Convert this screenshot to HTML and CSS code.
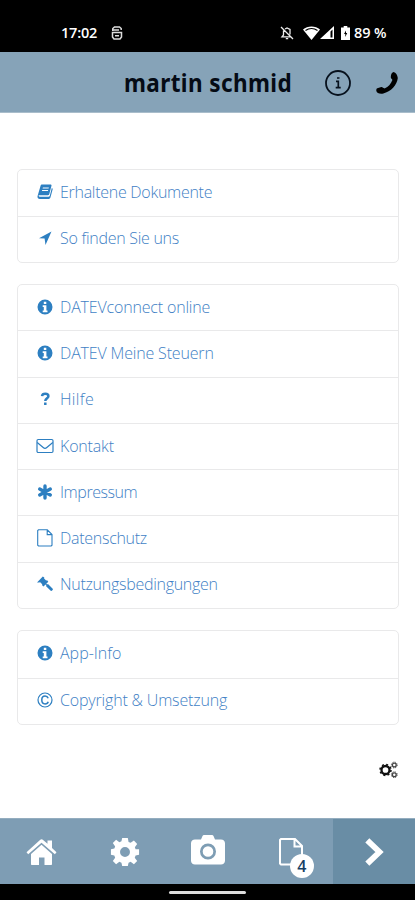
FILE: index.html
```html
<!DOCTYPE html>
<html lang="de">
<head>
<meta charset="utf-8">
<meta name="viewport" content="width=device-width">
<title>martin schmid</title>
<link rel="stylesheet" href="styles.css">
</head>
<body>
<svg class="defs" aria-hidden="true">
  <symbol id="info" viewBox="0 0 16 16"><path fill-rule="evenodd" d="M8 .5a7.500 7.500 0 1 0 0 15 7.500 7.500 0 0 0 0-15zM6.800 2.700h2.500v2.200H6.800zM5.700 6.300h3.700v5.100h1.100v1.800H5.700v-1.800h1.100V8.100H5.700z"/></symbol>
  <symbol id="gear" viewBox="0 0 32 32"><path fill-rule="evenodd" d="M13 1h6l.8 4.200 2.200.9L25.500 3.700 29 7.400l-2.500 3.500.8 2.200L31 13v6l-3.700.8-.9 2.200L29 25.500 25.500 29 22 26.500l-2.200.9L19 31h-6l-.8-3.600-2.200-.9L6.500 29 3 25.500 5.500 22l-.9-2.200L1 19v-6l3.600-.8.900-2.200L3 6.500 6.500 3 10 5.500l2.200-.9zM16 10.700a5.300 5.300 0 1 0 0 10.600 5.300 5.300 0 0 0 0-10.600z"/></symbol>
</svg>
<div class="phone">
  <div class="status">
    <span class="time">17:02</span>
    <svg class="s-app" viewBox="0 0 12 14" fill="none" stroke="#ddd" stroke-width="1.500"><path d="M1.800 5V2.500L3.500 1h5l1.700 1.500V4M1 4h7M1.500 6.500h9V11L9 13H3l-1.500-2zM4 9.700h4"/></svg>
    <svg class="s-bell" viewBox="0 0 14 14" fill="none" stroke="#eee" stroke-width="1.300"><path d="M1 1l12 12M3.500 4.500V9L2 10.800h8.500M5 3l2-1 3 1.500V8.500M5.800 12.700h2.400"/></svg>
    <svg class="s-wifi" viewBox="0 0 17 14"><path fill="#fff" d="M8.500 14L0 3.500C4.500-.6 12.500-.6 17 3.500z"/><path d="M2.500 4.500c3.500-2.400 8.500-2.400 12 0" stroke="#000" stroke-width="1.200" fill="none"/></svg>
    <svg class="s-cell" viewBox="0 0 14 13"><path fill="#fff" fill-rule="evenodd" d="M14 0v13H0zM10.500 5.500v6h2v-8z"/></svg>
    <svg class="s-bat" viewBox="0 0 9 14"><path fill="#fff" fill-rule="evenodd" d="M2.700 0h3.600v1.500H9V14H0V1.500h2.700zM5 4.500L3 8h1.300v3L6.200 7H5z"/></svg>
    <span class="pct">89 %</span>
  </div>
  <header class="bar">
    <h1><span>martin schmid</span></h1>
    <svg class="h-info" viewBox="0 0 26 26" fill="none" stroke="#07111d" stroke-width="1.800"><circle cx="13" cy="13" r="12"/><path stroke-width="1.700" d="M11 11.300h2.300v6M10.700 17.600h5M12 8h2.500"/></svg>
    <svg class="h-phone" viewBox="0 0 22 22"><path d="M17.500 0c2.500.3 3.800 3 4.300 6-.6 7-7 13.700-14.500 15.500C4 22.300.500 21 .3 18.800c-.1-1 .2-2.200 1-2.500l4-1.200c1.500-.2 2.200 1.800 3.700 1.200 3-1.300 6-4.500 7.300-8.100.3-1.500-1.600-1.500-1.500-3.200.2-2.500.7-4.500 2.700-5z"/></svg>
  </header>
  <main>
    <ul class="card">
      <li><svg class="ic" viewBox="0 0 16 16"><path fill-rule="evenodd" d="M5.200.5h8.300c.8 0 1.200.6 1 1.300L12.300 10c-.2.800-.8 1.200-1.500 1.200H2.200c-.5 0-.7.500-.5.900.2.400.5.600 1 .600h8.700c.7 0 1.200-.3 1.400-1l2-7.700c.8.400 1 .9.800 1.500L13.500 13.300c-.3 1.200-1.100 1.800-2.200 1.800H2.800C1.300 15.100.2 13.800.5 12.300L3.500 1.900C3.800 1 4.300.5 5.200.5zm.7 2.900l-.3 1h6l.3-1zM5.200 6l-.3 1h6l.3-1z"/></svg><a class="t1">Erhaltene Dokumente</a></li>
      <li><svg class="ic" viewBox="0 0 16 16"><path d="M14.500 1.500L8.500 15l-.9-6.500L2 8.300z"/></svg><a class="t1">So finden Sie uns</a></li>
    </ul>
    <ul class="card">
      <li><svg class="ic"><use href="#info"/></svg><a class="t2">DATEVconnect online</a></li>
      <li><svg class="ic"><use href="#info"/></svg><a class="t2">DATEV Meine Steuern</a></li>
      <li><svg class="ic" viewBox="0 0 16 16" fill="none" stroke="#2d7fc1" stroke-width="2.500"><path d="M5 5.200C5.400 2 11.400 2 11.400 5.200c0 2-3.100 2-3.100 4.800M8.300 11.500v2.600"/></svg><a class="t3">Hilfe</a></li>
      <li><svg class="ic wide" viewBox="0 0 18 16" fill="none" stroke="#2d7fc1" stroke-width="1.200"><rect x="1" y="1.500" width="16" height="13" rx="1.200"/><path d="M1.200 4.500l6 5c1 .9 2.600.9 3.600 0l6-5"/></svg><a class="t2">Kontakt</a></li>
      <li><svg class="ic" viewBox="0 0 16 16" stroke="#2d7fc1" stroke-width="3.400" stroke-linecap="round"><path d="M8 2v12M2.700 5l10.600 6M13.300 5L2.700 11"/></svg><a class="t4">Impressum</a></li>
      <li><svg class="ic tall" viewBox="0 0 16 18" fill="none" stroke="#2d7fc1" stroke-width="1.100"><path d="M1.500.8h8.800L15 5.500v10.700l-.8.800H1.500l-.8-.8V1.600zM10.200 1v4.600h4.700"/></svg><a class="t1">Datenschutz</a></li>
      <li><svg class="ic" viewBox="0 0 16 16"><path d="M0 6.500L5.800.5l1.500 1-.2 1 2 2 1-.2 1.200 1.400-2 2 .7.700 1-.3 4.700 4.600c.8 1-.9 2.800-2 2.100l-4.600-4.600.2-1-.8-.8-2 2.100-1.400-1.300.1-1-2-2-1.300.2z"/></svg><a class="t1">Nutzungsbedingungen</a></li>
    </ul>
    <ul class="card last">
      <li><svg class="ic"><use href="#info"/></svg><a>App-Info</a></li>
      <li><svg class="ic" viewBox="0 0 16 16" fill="none" stroke="#2d7fc1" stroke-width="1.200"><circle cx="8" cy="8" r="7"/><path stroke-width="1.500" d="M11.200 6.200C10.600 4.600 9.500 4.100 8.100 4.100 6 4.100 4.800 5.700 4.800 8s1.200 3.900 3.300 3.900c1.600 0 2.700-.7 3.100-2.200"/></svg><a class="t2">Copyright &amp; Umsetzung</a></li>
    </ul>
    <svg class="cogs" viewBox="0 0 19 18" fill="none" stroke="#111"><circle cx="6.500" cy="9" r="4" stroke-width="2.300"/><circle cx="6.500" cy="9" r="5.500" stroke-width="1.500" stroke-dasharray="2 2.320"/><g stroke="#444"><circle cx="15.300" cy="4" r="1.900" stroke-width="1.300"/><circle cx="15.300" cy="4" r="2.900" stroke-width="1" stroke-dasharray="1.200 1.078"/><circle cx="15.300" cy="13.700" r="1.900" stroke-width="1.300"/><circle cx="15.300" cy="13.700" r="2.900" stroke-width="1" stroke-dasharray="1.200 1.078"/></g></svg>
  </main>
  <nav>
    <span><svg class="n-home" viewBox="0 0 30 26" fill="#fff"><path d="M15 5.800L25.500 15v10c0 .6-.4 1-1 1H18v-7.500h-5.500V26h-7c-.6 0-1-.4-1-1V15z"/><path d="M13.500.9c.9-.8 2.200-.8 3.100 0L21 4.800V1.500h4.500V9l4.500 4.200-1.600 2L15 3.700 1.700 15.200 0 13.200z"/></svg></span>
    <span><svg class="n-gear" fill="#fff"><use href="#gear"/></svg></span>
    <span><svg class="n-cam" viewBox="0 0 34 30"><path fill="#fff" fill-rule="evenodd" d="M4 4.500h6L11.500 1c.3-.6.8-1 1.500-1h8c.7 0 1.200.4 1.500 1L24 4.500h6c2.300 0 4 1.500 4 3.700v17.600c0 2.300-1.700 3.700-4 3.700H4c-2.300 0-4-1.400-4-3.700V8.200c0-2.200 1.700-3.700 4-3.700zM17 8.500a8 8 0 1 0 0 16 8 8 0 0 0 0-16zM17 11.200a5.300 5.300 0 1 1 0 10.600 5.300 5.300 0 0 1 0-10.600z"/></svg></span>
    <span class="docs"><svg class="n-doc" viewBox="0 0 24 28" fill="none" stroke="#fff" stroke-width="2"><path d="M2 1h14l7 7v18.500H2L1 25.500V2zM15.500 1.500v7H23"/></svg><b class="badge">4</b></span>
    <span class="next"><svg class="n-next" viewBox="0 0 19 28" fill="none" stroke="#fff" stroke-width="5.800"><path d="M2.300 2.300L14.500 14 2.300 25.700"/></svg></span>
  </nav>
  <footer><i></i></footer>
</div>
</body>
</html>
```
FILE: styles.css
```css
* { box-sizing: border-box; }
body { margin: 0; background: #fff; font-family: "Open Sans", "Noto Sans", sans-serif; }
.defs { position: absolute; width: 0; height: 0; }
svg { display: block; flex: none; }
.phone { width: 415px; height: 900px; display: flex; flex-direction: column; overflow: hidden; }

.status { height: 52px; flex: none; background: #000; color: #fff; display: flex; align-items: center; padding: 13px 0 0 61px; font: 600 14.500px "Open Sans", sans-serif; }
.time { width: 50px; letter-spacing: -.2px; }
.s-app { width: 12px; height: 14px; margin-right: 157px; }
.s-bell { width: 14px; height: 14px; margin-right: 9px; }
.s-wifi { width: 17px; height: 14px; }
.s-cell { width: 14px; height: 13px; margin-right: 7px; }
.s-bat { width: 9px; height: 14px; margin-right: 4px; }
.pct { white-space: nowrap; letter-spacing: -.1px; }

.bar { height: 61px; flex: none; background: #86a3b8; border-bottom: 1px solid #a9bdcb; display: flex; align-items: center; padding-left: 124px; }
h1 { width: 201px; margin: 0; font: 700 25px/34px "Noto Sans", sans-serif; white-space: nowrap; color: #050b15; }
h1 span { display: inline-block; transform: scaleX(.9); transform-origin: 0 50%; letter-spacing: .45px; }
.h-info { width: 26px; height: 26px; margin: 1px 25px 0 0; }
.h-phone { width: 22px; height: 22px; margin-top: 2px; }

main { flex: 1; padding: 56px 16px 0 17px; display: flex; flex-direction: column; gap: 21px; }
.card { margin: 0; padding: 0; list-style: none; border: 1px solid #e9e9ea; border-radius: 5px; }
.card li { height: 46.300px; display: flex; align-items: center; padding: 0 0 2px 19px; border-top: 1px solid #e9e9ea; }
.card li:first-child { height: 45.500px; border-top: 0; }
.card.last li:first-child { height: 46.500px; }
.ic { width: 16px; height: 16px; margin-right: 7px; fill: #2d7fc1; }
.ic[fill="none"] { fill: none; }
.wide { width: 18px; margin: 0 6px 0 -1px; }
.tall { height: 18px; }
.card a { font-size: 16px; line-height: 24px; font-weight: 300; color: #3f7fc5; white-space: nowrap; }
.card .t1 { letter-spacing: -.28px; }
.card .t2 { letter-spacing: -.17px; }
.card .t3 { letter-spacing: .35px; }
.card .t4 { letter-spacing: -.43px; }
.cogs { width: 19px; height: 18px; align-self: flex-end; margin: 15px 1px 0 0; }

nav { height: 66px; flex: none; background: #7e9db4; border-top: 1px solid #94adbf; display: grid; grid-template-columns: repeat(4, 83.250px) 1fr; }
nav span { display: flex; align-items: center; justify-content: center; }
.n-home { width: 31px; height: 26px; }
.n-gear { width: 30px; height: 30px; }
.n-cam { width: 34px; height: 30px; margin-bottom: 4px; }
.docs { position: relative; }
.n-doc { width: 24px; height: 28px; margin-top: 1px; }
.badge { position: absolute; left: 40px; top: 35px; width: 24px; height: 24px; border-radius: 50%; background: #fff; color: #173f63; font: 600 16px/24px "Open Sans", sans-serif; text-align: center; }
.next { background: #698da5; }
.n-next { width: 19px; height: 28px; }
footer { height: 16px; flex: none; background: #000; display: flex; justify-content: center; padding-top: 7px; }
footer i { width: 77px; height: 3px; border-radius: 2px; background: #ddd; }
```
